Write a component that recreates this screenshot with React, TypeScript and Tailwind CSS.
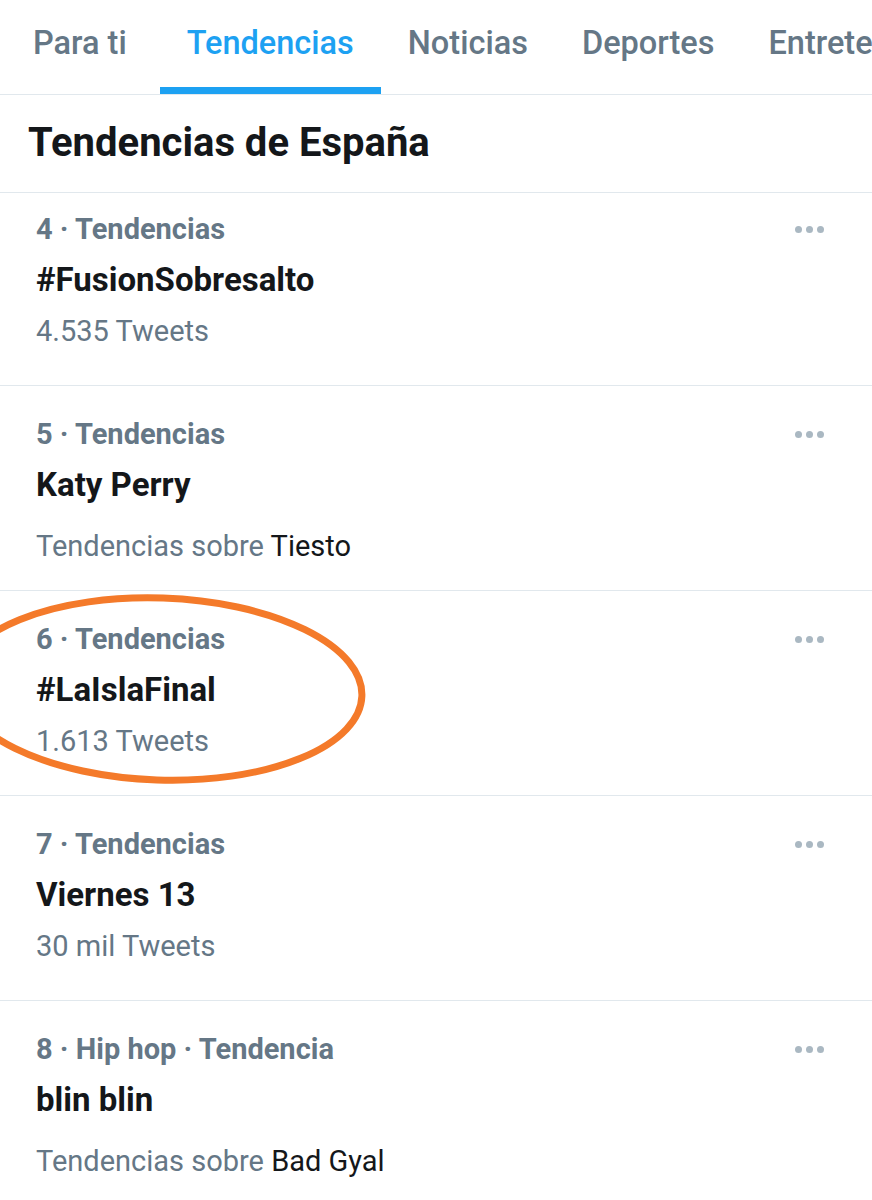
const tabs = ["Para ti", "Tendencias", "Noticias", "Deportes", "Entretenimiento"];

type Trend = {
  meta: string;
  title: string;
  count?: string;
  about?: string;
  first?: boolean;
};

const trends: Trend[] = [
  { meta: "4 · Tendencias", title: "#FusionSobresalto", count: "4.535 Tweets", first: true },
  { meta: "5 · Tendencias", title: "Katy Perry", about: "Tiesto" },
  { meta: "6 · Tendencias", title: "#LaIslaFinal", count: "1.613 Tweets" },
  { meta: "7 · Tendencias", title: "Viernes 13", count: "30 mil Tweets" },
  { meta: "8 · Hip hop · Tendencia", title: "blin blin", about: "Bad Gyal" },
];

function Dots() {
  return (
    <div className="flex gap-[4px] pt-[14px]">
      <span className="w-[7px] h-[7px] rounded-full bg-[#aab8c2]" />
      <span className="w-[7px] h-[7px] rounded-full bg-[#aab8c2]" />
      <span className="w-[7px] h-[7px] rounded-full bg-[#aab8c2]" />
    </div>
  );
}

function TrendRow({ t }: { t: Trend }) {
  return (
    <div
      className={`flex justify-between border-b border-[#e1e8ed] pl-[36px] pr-[48px] ${
        t.first ? "pt-[19px]" : "pt-[31px]"
      } ${t.about ? "pb-[27px]" : "pb-[37px]"}`}
    >
      <div className="flex flex-col">
        <div className="text-[29px] leading-[34px] font-bold text-[#657786]">{t.meta}</div>
        <div className="mt-[14px] text-[33px] leading-[40px] font-bold text-[#14171a]">
          {t.title}
        </div>
        {t.count && (
          <div className="mt-[14px] text-[29px] leading-[34px] text-[#657786]">{t.count}</div>
        )}
        {t.about && (
          <div className="mt-[24px] text-[29px] leading-[34px] text-[#657786]">
            Tendencias sobre <span className="text-[#14171a]">{t.about}</span>
          </div>
        )}
      </div>
      <Dots />
    </div>
  );
}

export default function App() {
  return (
    <div className="relative w-[872px] h-[1200px] overflow-hidden bg-white font-['Roboto',sans-serif]">
      <div className="flex border-b border-[#e1e8ed] pl-[6px] whitespace-nowrap">
        {tabs.map((tab, i) => (
          <div
            key={tab}
            className={`px-[27px] pt-[22px] pb-[22px] text-[32.5px] leading-[43px] font-medium border-b-[7px] ${
              i === 0 ? "mr-[6px]" : ""
            } ${
              tab === "Tendencias"
                ? "text-[#1da1f2] border-[#1da1f2]"
                : "text-[#657786] border-transparent"
            }`}
          >
            {tab}
          </div>
        ))}
      </div>
      <div className="border-b border-[#e1e8ed] pl-[28px] pt-[24px] pb-[25px]">
        <h1 className="text-[40px] leading-[48px] font-bold text-[#14171a]">
          Tendencias de España
        </h1>
      </div>
      {trends.map((t) => (
        <TrendRow key={t.title} t={t} />
      ))}
      <svg
        className="absolute left-0 top-0 pointer-events-none"
        width="872"
        height="1200"
        viewBox="0 0 872 1200"
      >
        <ellipse
          cx="160"
          cy="689"
          rx="202"
          ry="91"
          transform="rotate(2 160 689)"
          fill="none"
          stroke="#f47a2a"
          strokeWidth="7"
        />
      </svg>
    </div>
  );
}
